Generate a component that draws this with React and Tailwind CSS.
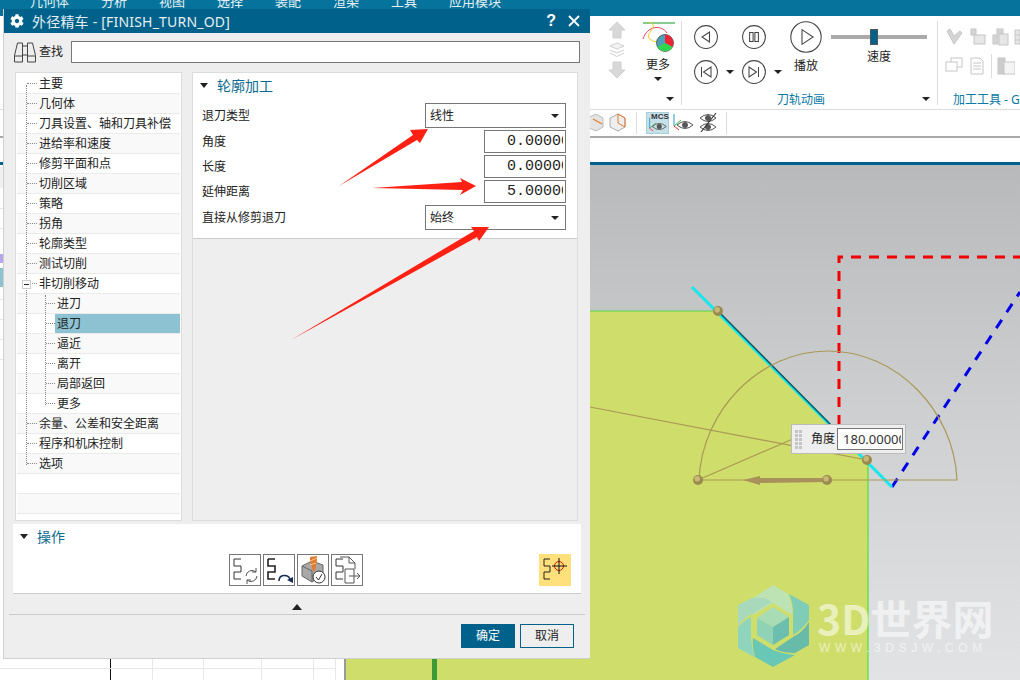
import React from "react";
import { FaCog } from "react-icons/fa";

const FONT = '"Noto Sans","Noto Sans CJK SC",sans-serif';

const tree = [
  ["主要", 0], ["几何体", 0], ["刀具设置、轴和刀具补偿", 0], ["进给率和速度", 0], ["修剪平面和点", 0],
  ["切削区域", 0], ["策略", 0], ["拐角", 0], ["轮廓类型", 0], ["测试切削", 0], ["非切削移动", 0],
  ["进刀", 1], ["退刀", 1], ["逼近", 1], ["离开", 1], ["局部返回", 1], ["更多", 1],
  ["余量、公差和安全距离", 0], ["程序和机床控制", 0], ["选项", 0], ["", 2], ["", 2],
];

const Caret = ({ className = "" }) => (
  <span className={"block w-0 h-0 border-l-[4px] border-r-[4px] border-t-[4px] border-l-transparent border-r-transparent border-t-[#222] " + className} />
);

const Transport = ({ size = 24, children }) => (
  <svg width={size} height={size} viewBox="0 0 24 24" fill="none" stroke="#444" strokeWidth={size > 24 ? 0.8 : 1.05}>
    <circle cx="12" cy="12" r="11.4" />
    {children}
  </svg>
);

const Field = ({ value }) => (
  <div className="h-[23px] w-[82px] border border-[#777] bg-white overflow-hidden pl-[22px] pr-[2px]">
    <div className="overflow-hidden whitespace-nowrap text-[15px] leading-[21px] text-[#222]" style={{ fontFamily: '"Liberation Mono",monospace' }}>{value}</div>
  </div>
);

const Select = ({ value }) => (
  <div className="h-[25px] w-[141px] border border-[#777] bg-white flex items-center justify-between pl-[4px] pr-[6px] text-[12px] text-[#222]">
    <span>{value}</span>
    <Caret />
  </div>
);

const FormRow = ({ label, children, h }) => (
  <div className={"flex items-center justify-between pl-[9px] pr-[11px] " + h}>
    <span className="text-[12px] text-[#222]">{label}</span>
    {children}
  </div>
);

const bracket = "M4 4H11M4 4V11H11V17H4V24H11";

const ActionBox = ({ children }) => (
  <div className="w-[32px] h-[32px] border border-[#777] bg-white">
    <svg width="30" height="30" viewBox="0 0 30 30" fill="none">{children}</svg>
  </div>
);

const Eye = ({ cx = 12, cy = 15 }) => (
  <g fill="none" stroke="#555" strokeWidth="1">
    <path d={`M${cx - 8} ${cy}Q${cx} ${cy - 7} ${cx + 8} ${cy}Q${cx} ${cy + 7} ${cx - 8} ${cy}Z`} />
    <circle cx={cx} cy={cy} r="2.5" fill="#555" />
  </g>
);

const GrayIcon = ({ children }) => (
  <svg width="18" height="18" viewBox="0 0 18 18" fill="#e6e6e6" stroke="#c6c6c6" strokeWidth="1" className="shrink-0">{children}</svg>
);

function Ribbon() {
  return (
    <div className="flex h-[94px] bg-white border-b border-[#dcdcdc] shrink-0">
      <div className="w-[606px] shrink-0" />
      <div className="w-[22px] shrink-0 flex flex-col items-center pt-[5px] gap-[3px]">
        <svg width="18" height="18" viewBox="0 0 18 18"><path d="M9 1L17 9H13V17H5V9H1Z" fill="#d8d8d8" stroke="#cfcfcf" /></svg>
        <svg width="16" height="16" viewBox="0 0 16 16" fill="#f3f3f3" stroke="#d0d0d0"><path d="M8 1L15 4L8 7L1 4Z" /><path d="M1 8L8 11L15 8" fill="none" /><path d="M1 11L8 14.5L15 11" fill="none" /></svg>
        <svg width="18" height="18" viewBox="0 0 18 18"><path d="M9 17L17 9H13V1H5V9H1Z" fill="#d8d8d8" stroke="#cfcfcf" /></svg>
      </div>
      <div className="relative w-[47px] ml-[7px] shrink-0 flex flex-col items-center border-r border-[#dcdcdc] mt-[5px] mb-[4px]">
        <svg width="34" height="33" viewBox="0 0 34 33" fill="none" className="mt-[1px]">
          <path d="M2 1H34" stroke="#0a9a1e" strokeWidth="1" />
          <path d="M2 17C6 4 20 2 26 11" stroke="#ef3f5a" strokeWidth="1" />
          <path d="M8 0C20 4 2 12 9 17C12 20 16 20 18 19" stroke="#f4c81c" strokeWidth="1" />
          <circle cx="24" cy="21" r="8.5" fill="#4da2b8" stroke="#222" strokeWidth="0.6" />
          <path d="M24 21V12.5A8.5 8.5 0 0 1 31.4 25Z" fill="#ee2335" />
          <path d="M24 21L31.4 25A8.5 8.5 0 0 1 16.6 25Z" fill="#2fd84a" />
        </svg>
        <span className="text-[12px] leading-[16px] text-[#222] mt-[2px]">更多</span>
        <Caret className="mt-[4px]" />
        <Caret className="absolute right-[7px] bottom-[4px]" />
      </div>
      <div className="relative w-[256px] shrink-0 flex flex-col pl-[12px] border-r border-[#dcdcdc] mt-[5px] mb-[4px]">
        <div className="flex">
          <div className="grid grid-cols-[24px_24px_24px_24px] grid-rows-[24px_24px] gap-y-[11px] items-center justify-items-center mt-[4px]">
            <Transport><path d="M15.5 7V17L8 12Z" /></Transport>
            <span />
            <Transport><rect x="7.6" y="7.5" width="3.5" height="9" /><rect x="12.9" y="7.5" width="3.5" height="9" /></Transport>
            <span />
            <Transport><path d="M17 7V17L9.5 12Z" /><path d="M7.5 7V17" /></Transport>
            <Caret />
            <Transport><path d="M7 7V17L14.5 12Z" /><path d="M16.5 7V17" /></Transport>
            <Caret />
          </div>
          <div className="flex flex-col items-center w-[32px]">
            <Transport size={32}><path d="M9 6.5V17.5L17.3 12Z" /></Transport>
            <span className="text-[12px] leading-[16px] text-[#222] mt-[5px]">播放</span>
          </div>
          <div className="ml-[9px] w-[96px] flex flex-col items-center">
            <div className="relative w-full h-[4px] bg-[#aaa] mt-[14px]">
              <span className="absolute left-[39px] top-[-6px] w-[8px] h-[16px] bg-[#00618a] border border-[#555]" />
            </div>
            <span className="text-[12px] leading-[16px] text-[#222] mt-[10px]">速度</span>
          </div>
        </div>
        <div className="absolute left-0 bottom-[-3px] w-[238px] text-center text-[12px] leading-[16px] text-[#0a78a6]">刀轨动画</div>
        <Caret className="absolute right-[7px] bottom-[4px]" />
      </div>
      <div className="relative flex-1 overflow-hidden pl-[7px] pt-[7px] mt-[5px]">
        <div className="flex gap-[5px]">
          <GrayIcon><path d="M2 3L5 1L9 8L15 3L17 5L9 16Z" fill="#d4d4d4" /></GrayIcon>
          <GrayIcon><rect x="3" y="1" width="5" height="6" fill="#d4d4d4" /><rect x="6" y="7" width="11" height="9" /></GrayIcon>
          <GrayIcon><rect x="6" y="1" width="6" height="5" fill="#d4d4d4" /><rect x="2" y="7" width="5" height="9" fill="#d4d4d4" /><rect x="8" y="6" width="9" height="11" /></GrayIcon>
          <GrayIcon><path d="M1 2H18V16H1ZM1 7H18M1 12H18M6 2V16" /></GrayIcon>
        </div>
        <div className="flex gap-[5px] mt-[8px] items-center">
          <GrayIcon><rect x="6" y="1" width="11" height="9" fill="#fff" /><rect x="1" y="5" width="11" height="9" fill="#fff" /></GrayIcon>
          <GrayIcon><path d="M3 1H12L15 4V17H3ZM5 6H13M5 9H13M5 12H13" fill="#fff" /></GrayIcon>
          <span className="w-px h-[24px] bg-[#ddd] shrink-0" />
          <GrayIcon><rect x="1" y="1" width="7" height="16" fill="#ccc" /><rect x="7" y="5" width="11" height="12" fill="#f4f4f4" /></GrayIcon>
        </div>
        <div className="absolute left-[15px] bottom-[1px] whitespace-nowrap text-[12px] leading-[16px] text-[#0a78a6]">加工工具 - GO</div>
      </div>
    </div>
  );
}

function Toolbar() {
  return (
    <div className="flex items-center h-[28px] bg-white border-b-2 border-[#aaa] pl-[590px] shrink-0">
      <svg width="44" height="22" viewBox="0 0 44 22" fill="none" className="shrink-0">
        <path d="M-3 6L6 2L13 6V15L6 19L-3 15Z" fill="#e4e4e4" stroke="#bbb" />
        <path d="M3 7L12 12" stroke="#e47a2e" strokeWidth="1.2" />
        <path d="M20 6L28 2L35 6V15L28 19L20 15Z" fill="#eee" stroke="#aaa" />
        <path d="M28 2L35 6V15L28 11Z" stroke="#e47a2e" />
      </svg>
      <span className="w-px h-[22px] bg-[#ddd] ml-[2px]" />
      <div className="w-[23px] h-[22px] ml-[9px] bg-[#c6e0e8] border border-[#a6cfdb] relative">
        <span className="absolute left-[4px] top-[-2px] text-[8px] font-bold leading-[12px] text-[#333] whitespace-nowrap" style={{ fontFamily: '"Liberation Sans",sans-serif' }}>MCS</span>
        <svg width="21" height="20" viewBox="0 0 24 22" className="absolute left-0 top-0">
          <path d="M3 5V17" stroke="#2a9ad0" /><path d="M3 17L10 11" stroke="#37b34a" /><path d="M3 17L7 20" stroke="#e33" />
          <Eye cx={14} cy={15} />
        </svg>
      </div>
      <svg width="24" height="22" viewBox="0 0 24 22" className="ml-[2px]">
        <path d="M3 2V14" stroke="#2a9ad0" /><path d="M3 14L10 8" stroke="#37b34a" /><path d="M3 14L8 18" stroke="#e33" />
        <Eye cx={14} cy={13} />
      </svg>
      <svg width="24" height="22" viewBox="0 0 24 22" className="ml-[1px]">
        <Eye cx={12} cy={6} />
        <Eye cx={12} cy={15} />
        <path d="M20 1L5 20" stroke="#333" strokeWidth="1.2" />
      </svg>
      <span className="w-px h-[22px] bg-[#ddd] ml-[6px]" />
    </div>
  );
}

function Dialog() {
  return (
    <div className="absolute left-[3px] top-[9px] w-[587px] h-[650px] bg-[#eeeeee] flex flex-col border-l border-b border-[#cfcfcf]">
      <div className="h-[24px] bg-[#00628a] flex items-center text-white shrink-0 pl-[6px] pr-[10px]">
        <FaCog className="text-[14px]" />
        <span className="ml-[8px] text-[14px] tracking-[0.2px] text-[#e6eff3] whitespace-nowrap">外径精车 - [FINISH_TURN_OD]</span>
        <span className="ml-auto text-[16px] font-bold leading-none" style={{ fontFamily: '"Liberation Sans",sans-serif' }}>?</span>
        <svg width="12" height="12" viewBox="0 0 12 12" className="ml-[12px]" stroke="#fff" strokeWidth="1.8"><path d="M1 1L11 11M11 1L1 11" /></svg>
      </div>

      <div className="flex items-center h-[22px] mt-[8px] pl-[9px] pr-[10px] shrink-0">
        <svg width="24" height="22" viewBox="0 0 24 22" fill="none" stroke="#444" strokeWidth="1">
          <path d="M1.5 14.5L4.5 2H9.5V21H1.5Z" /><path d="M22.5 14.5L19.5 2H14.5V21H22.5Z" />
          <path d="M9.5 5H14.5V14H9.5M1.5 15H9.5M14.5 15H22.5" />
        </svg>
        <span className="ml-[2px] text-[12px] text-[#222]">查找</span>
        <div className="ml-[8px] flex-1 h-[22px] bg-white border border-[#777]" />
      </div>

      <div className="flex gap-[10px] px-[11px] mt-[9px] h-[449px] shrink-0">
        <div className="relative w-[167px] bg-white border border-[#dcdcdc] pt-[1px] pl-[1px] pr-[1px]">
          {tree.map(([t, d], i) => (
            <div key={i} className={"relative flex items-center h-[20px] border-b border-[#eaeaea] " + (i % 2 === 1 ? "bg-[#f9f9f9]" : "bg-white")}>
              {d === 0 && <span className="w-[10px] ml-[10px] border-t border-dotted border-[#888]" />}
              {d === 1 && <span className="w-[9px] ml-[29px] border-t border-dotted border-[#888]" />}
              {t === "退刀" ? (
                <span className="absolute left-[38px] top-0 right-0 h-[19px] bg-[#8cc2d2] pl-[2px] text-[12px] leading-[19px] text-[#222]">{t}</span>
              ) : (
                <span className="ml-[2px] text-[12px] leading-[19px] text-[#222] whitespace-nowrap">{t}</span>
              )}
            </div>
          ))}
          <span className="absolute left-[10px] top-[12px] h-[380px] border-l border-dotted border-[#888]" />
          <span className="absolute left-[29px] top-[222px] h-[110px] border-l border-dotted border-[#888]" />
          <span className="absolute left-[6px] top-[207px] w-[9px] h-[9px] bg-white border border-[#ccc] flex items-center justify-center">
            <span className="w-[5px] h-px bg-[#222]" />
          </span>
        </div>

        <div className="w-[386px] bg-[#eeeeee] border border-[#dcdcdc]">
          <div className="bg-white h-[166px] border-b border-[#ccc]">
            <div className="flex items-center h-[25px] pl-[7px]">
              <Caret className="border-t-[#0a6a90] border-t-[5px]" />
              <span className="ml-[9px] text-[14px] text-[#0a6a90]">轮廓加工</span>
            </div>
            <div className="flex flex-col pt-[5px]">
              <FormRow label="退刀类型" h="h-[25px]"><Select value="线性" /></FormRow>
              <FormRow label="角度" h="h-[23px] mt-[2px]"><Field value="0.00000" /></FormRow>
              <FormRow label="长度" h="h-[23px] mt-[2px]"><Field value="0.00000" /></FormRow>
              <FormRow label="延伸距离" h="h-[23px] mt-[2px]"><Field value="5.00000" /></FormRow>
              <FormRow label="直接从修剪退刀" h="h-[25px] mt-[2px]"><Select value="始终" /></FormRow>
            </div>
          </div>
        </div>
      </div>

      <div className="mx-[9px] mt-[3px] h-[70px] bg-white border-b border-[#ccc] shrink-0 flex flex-col">
        <div className="flex items-center h-[25px] pl-[7px]">
          <Caret className="border-t-[#0a6a90] border-t-[5px]" />
          <span className="ml-[9px] text-[14px] text-[#0a6a90]">操作</span>
        </div>
        <div className="relative flex gap-[2px] pl-[216px] mt-[5px]">
          <ActionBox>
            <path d={bracket} stroke="#333" />
            <path d="M16 21A6 6 0 0 1 26 17M27 21A6 6 0 0 1 17 25" stroke="#555" />
            <path d="M26 13V17H22M17 29V25H21" stroke="#555" />
          </ActionBox>
          <ActionBox>
            <path d={bracket} stroke="#222" strokeWidth="1.6" />
            <path d="M15 26C15 19 24 19 26 24" stroke="#1a2a5a" strokeWidth="1.6" />
            <path d="M23 25L29 22V28Z" fill="#1a2a5a" />
          </ActionBox>
          <ActionBox>
            <path d="M4 11L14 6L25 10V20L14 27L4 21Z" fill="#a8a8a8" stroke="#666" />
            <path d="M4 11L14 16V27" stroke="#666" />
            <path d="M12 2L19 1V5L17 16H15L12 6Z" fill="#e27a2a" />
            <path d="M12 6L19 3M12 10L18 8" stroke="#f4c89a" />
            <circle cx="21" cy="22" r="6" fill="#fff" stroke="#333" />
            <path d="M18 22L20.5 25L24 19" stroke="#333" />
          </ActionBox>
          <ActionBox>
            <path d={bracket} stroke="#333" />
            <path d="M8 2H17L23 8V14" stroke="#555" />
            <path d="M17 2V8H23" stroke="#555" />
            <path d="M13 14H22V28H13Z" fill="#fff" stroke="#555" />
            <path d="M17 21H28M25 18L28 21L25 24" stroke="#555" />
          </ActionBox>
          <div className="absolute left-[525px] top-0 w-[33px] h-[32px] bg-[#ffe07a] border-l border-[#fff]">
            <svg width="32" height="32" viewBox="0 0 32 32" fill="none">
              <path d="M5 5H11M5 5V12H11V18H5V25H11" stroke="#222" />
              <circle cx="20" cy="12" r="4.5" stroke="#e01010" />
              <path d="M13 12H28M20 4V20" stroke="#111" />
            </svg>
          </div>
        </div>
      </div>

      <div className="h-[21px] shrink-0 flex items-center justify-center mx-[5px] border-b border-[#ccc]">
        <span className="block w-0 h-0 border-l-[5px] border-r-[5px] border-b-[6px] border-l-transparent border-r-transparent border-b-[#222] mt-[6px]" />
      </div>

      <div className="flex justify-end gap-[5px] pr-[16px] mt-[9px]">
        <div className="w-[54px] h-[24px] bg-[#00628a] text-white text-[12px] flex items-center justify-center">确定</div>
        <div className="w-[54px] h-[24px] border border-[#00628a] text-[#222] text-[12px] flex items-center justify-center">取消</div>
      </div>
    </div>
  );
}

const Ball = ({ x, y }) => (
  <g>
    <circle cx={x} cy={y} r="5" fill="#9a8a4e" />
    <circle cx={x - 0.8} cy={y - 1.2} r="2.8" fill="#c8b878" />
  </g>
);

function Viewport() {
  return (
    <div className="relative flex-1 bg-gradient-to-b from-[#b8b9bb] via-[#cfd0d2] to-[#e2e3e5]">
      <svg width="674" height="515" viewBox="346 165 674 515" className="absolute left-0 top-0">
        <path d="M346 311H718L868 462V680H346Z" fill="#cfdd6b" />
        <path d="M590 311H718" stroke="#52d64a" strokeWidth="1.2" fill="none" />
        <path d="M868 462V680" stroke="#48e33c" strokeWidth="1.2" />
        <path d="M432 659H437V680H432Z" fill="#3b9a33" />
        <path d="M839 425V257H1020" stroke="#f00000" strokeWidth="3" strokeDasharray="10 8" fill="none" />
        <path d="M892 487L1020 292" stroke="#0000e6" strokeWidth="3" strokeDasharray="10 9" />
        <path d="M692 287L892 487" stroke="#12e8ee" strokeWidth="3" />
        <path d="M718 311L832 426" stroke="#13585c" strokeWidth="1.6" />
        <g stroke="#ab9856" strokeWidth="1.2" fill="none">
          <path d="M699 480C702 410 760 351 828 351C896 351 954 410 957 480H699" />
          <path d="M590 407L867 460" />
          <path d="M698 480L795 438" />
        </g>
        <path d="M743 480L760 476V478L827 478V482L760 483V485Z" fill="#a8915a" />
        <Ball x={718} y={311} />
        <Ball x={867} y={460} />
        <Ball x={698} y={480} />
        <Ball x={827} y={480} />
        <path d="M773 585L788 594Q793 606 792 615L773 603L753 615Q756 600 753 598Z" fill="#bde3b4" />
        <path d="M789 594L809 605V620Q802 630 793 635V617Q794 605 789 594Z" fill="#7fcdb6" />
        <path d="M809 622V645L795 653Q782 653 775 649L793 637Q803 632 809 622Z" fill="#69bba9" />
        <path d="M753 638L773 650Q783 654 795 655L773 667L755 657Q752 648 753 638Z" fill="#68c8b5" />
        <path d="M738 627Q745 620 751 617V637Q752 648 754 657L738 648Z" fill="#8fd5bd" />
        <path d="M738 605L752 598Q764 596 772 602L752 614Q744 618 738 626Z" fill="#a8d9bb" />
        <path d="M773 607L789 617L773 627L757 618Z" fill="#a8dcb5" />
        <path d="M757 618L773 627V645L757 635Z" fill="#8fd2b5" />
        <path d="M789 617V635L773 645V627Z" fill="#6cbfae" />
      </svg>
      <div className="absolute left-[471px] top-[432px] text-[41px] leading-[40px] font-bold whitespace-nowrap text-white/55" style={{ fontFamily: '"Noto Sans CJK SC",sans-serif' }}>3D世界网</div>
      <div className="absolute left-[473px] top-[476px] text-[12px] leading-[14px] whitespace-nowrap text-white/55 tracking-[4.6px]" style={{ fontFamily: '"Liberation Sans",sans-serif' }}>WWW.3DSJW.COM</div>

      <div className="absolute left-[445px] top-[259px] w-[115px] h-[30px] bg-[#eeeeee] border border-[#bbb] flex items-center pl-[3px]">
        <div className="grid grid-cols-2 gap-[1px] w-[7px]">
          {Array.from({ length: 10 }).map((_, i) => <span key={i} className="w-[3px] h-[3px] bg-[#c4c4c4]" />)}
        </div>
        <span className="ml-[9px] text-[12px] text-[#222] whitespace-nowrap">角度</span>
        <div className="ml-[2px] w-[66px] h-[22px] border border-[#777] bg-white overflow-hidden pl-[5px] pr-[1px]">
          <div className="overflow-hidden whitespace-nowrap text-[13px] leading-[20px] text-[#333]">180.00000</div>
        </div>
      </div>
    </div>
  );
}

export default function App() {
  return (
    <div className="relative w-[1020px] h-[680px] overflow-hidden bg-white flex flex-col" style={{ fontFamily: FONT }}>
      <div className="h-[16px] bg-[#05739c] overflow-hidden shrink-0">
        <div className="flex gap-[32px] pl-[30px] -mt-[9px] text-[13px] leading-[20px] text-[#e6f0f4] whitespace-nowrap">
          {["几何体", "分析", "视图", "选择", "装配", "渲染", "工具", "应用模块"].map((t) => <span key={t}>{t}</span>)}
        </div>
      </div>
      <Ribbon />
      <Toolbar />
      <div className="h-[24px] bg-white shrink-0" />
      <div className="h-[3px] bg-[#00628a] shrink-0" />
      <div className="flex flex-1 min-h-0">
        <div className="relative w-[346px] shrink-0 bg-white border-r-2 border-[#999]">
          <span className="absolute left-0 top-[2px] w-[3px] h-[21px] bg-[#f0f0f0]" />
          <span className="absolute left-0 top-[43px] w-[3px] h-px bg-[#e6e6e6]" />
          <span className="absolute left-0 top-[63px] w-[3px] h-px bg-[#e6e6e6]" />
          <span className="absolute left-0 top-[89px] w-[3px] h-[9px] bg-[#b9a6f0]" />
          <span className="absolute left-0 top-[103px] w-[3px] h-[19px] bg-[#8cc2d2]" />
          <span className="absolute left-0 top-[134px] w-[3px] h-px bg-[#e6e6e6]" />
          <span className="absolute left-0 top-[154px] w-[3px] h-px bg-[#e6e6e6]" />
          <span className="absolute left-0 top-[174px] w-[3px] h-px bg-[#e6e6e6]" />
          <span className="absolute left-0 top-[194px] w-[3px] h-px bg-[#e6e6e6]" />
          <span className="absolute left-[110px] top-[494px] w-px h-[21px] bg-[#111]" />
          <span className="absolute left-[152px] top-[494px] w-px h-[21px] bg-[#e8e8e8]" />
          <span className="absolute left-[203px] top-[494px] w-px h-[21px] bg-[#e8e8e8]" />
          <span className="absolute left-[261px] top-[494px] w-px h-[21px] bg-[#e8e8e8]" />
          <span className="absolute left-[313px] top-[494px] w-px h-[21px] bg-[#e8e8e8]" />
          <span className="absolute left-[335px] top-[494px] w-px h-[21px] bg-[#e8e8e8]" />
          <span className="absolute left-0 top-[503px] w-[335px] h-px bg-[#e8e8e8]" />
        </div>
        <Viewport />
      </div>
      <Dialog />
      <svg width="1020" height="680" className="absolute left-0 top-0 pointer-events-none" fill="#ff2014">
        <path d="M339 186L413 135L410 130L428 129L420 143L417 140Z" />
        <path d="M372 188L462 182L460 178L476 186L460 195L463 190Z" />
        <path d="M291 340L474 231L471 227L489 227L479 241L477 237Z" />
      </svg>
    </div>
  );
}
